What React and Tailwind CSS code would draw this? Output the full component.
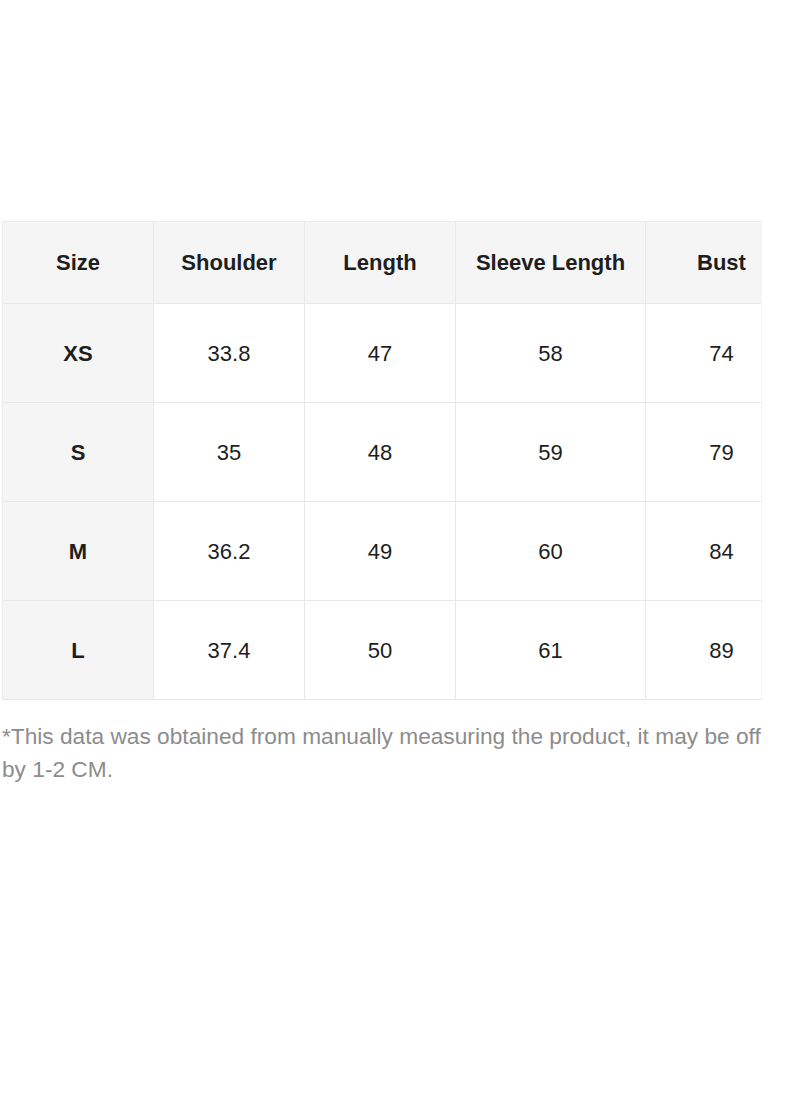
const columns = ['Size', 'Shoulder', 'Length', 'Sleeve Length', 'Bust']

const rows = [
  ['XS', '33.8', '47', '58', '74'],
  ['S', '35', '48', '59', '79'],
  ['M', '36.2', '49', '60', '84'],
  ['L', '37.4', '50', '61', '89'],
]

const grid = 'grid grid-cols-[151px_151px_151px_190px_117px]'

export default function App() {
  return (
    <div className="min-h-[1096px] w-[800px] bg-white pt-[221px] pl-[2px] font-['Liberation_Sans',Arial,sans-serif]">
      {/* Size table */}
      <div className="w-[760px] border-l border-t border-r border-l-[#ececec] border-t-[#ececec] border-r-[#f4f4f4]">
        <div className={`${grid} h-[82px] bg-[#f5f5f5] border-b border-[#e8e8e8]`}>
          {columns.map((c, i) => (
            <div
              key={c}
              className={`flex items-center justify-center text-[22px] font-bold text-[#1e1e1e] ${i < 4 ? 'border-r border-[#e8e8e8]' : 'pl-[34px]'}`}
            >
              {c}
            </div>
          ))}
        </div>
        {rows.map((r) => (
          <div key={r[0]} className={`${grid} h-[99px] border-b border-[#e8e8e8]`}>
            {r.map((v, i) => (
              <div
                key={i}
                className={`flex items-center justify-center text-[22px] text-[#1e1e1e] ${i === 0 ? 'bg-[#f5f5f5] font-bold' : ''} ${i < 4 ? 'border-r border-[#e8e8e8]' : 'pl-[34px]'}`}
              >
                {v}
              </div>
            ))}
          </div>
        ))}
      </div>

      <p className="mt-[20px] w-[768px] text-[22.7px] leading-[33px] text-[#8c8c8c]">
        *This data was obtained from manually measuring the product, it may be off by 1-2 CM.
      </p>
    </div>
  )
}
